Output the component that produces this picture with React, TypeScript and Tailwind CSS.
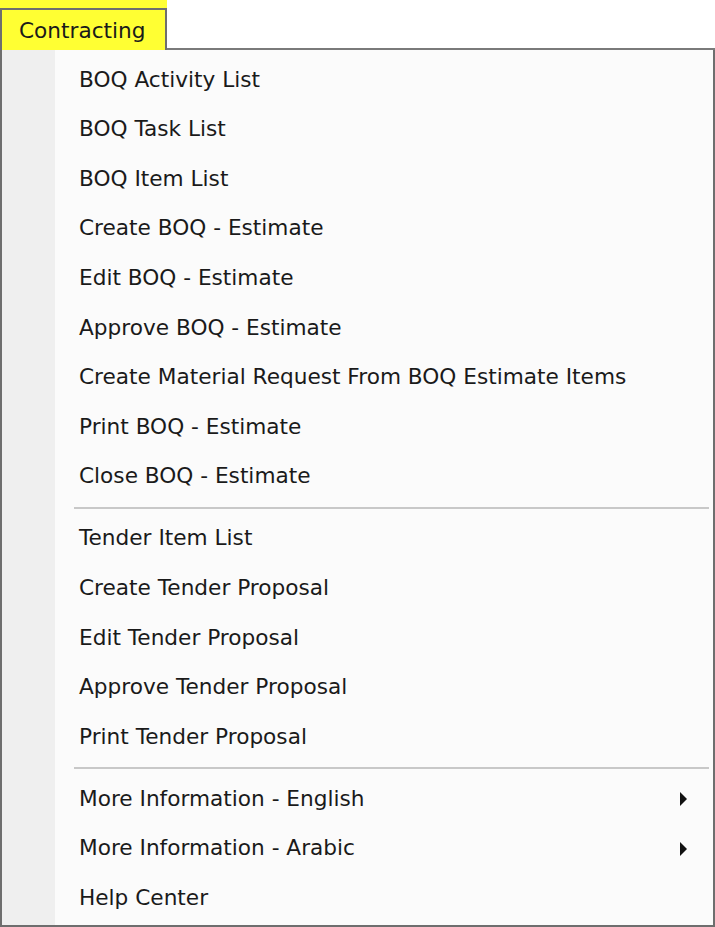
const groups = [
  [
    "BOQ Activity List",
    "BOQ Task List",
    "BOQ Item List",
    "Create BOQ - Estimate",
    "Edit BOQ - Estimate",
    "Approve BOQ - Estimate",
    "Create Material Request From BOQ Estimate Items",
    "Print BOQ - Estimate",
    "Close BOQ - Estimate",
  ],
  [
    "Tender Item List",
    "Create Tender Proposal",
    "Edit Tender Proposal",
    "Approve Tender Proposal",
    "Print Tender Proposal",
  ],
  ["More Information - English", "More Information - Arabic", "Help Center"],
];

const withArrow = ["More Information - English", "More Information - Arabic"];

function MenuItem({ label }: { label: string }) {
  return (
    <div className="flex h-[49.6px] items-center justify-between pl-[77px] pr-[25px]">
      <span>{label}</span>
      {withArrow.includes(label) && (
        <svg width="9" height="14" viewBox="0 0 9 14">
          <path d="M1 0 L8 7 L1 14 Z" fill="#111" />
        </svg>
      )}
    </div>
  );
}

export default function App() {
  return (
    <div
      className="h-[927px] w-[715px] bg-white text-[21.65px] text-[#1a1a1a]"
      style={{ fontFamily: "Tahoma, 'DejaVu Sans', sans-serif" }}
    >
      <div className="flex h-[50px]">
        <div className="w-[167px] bg-[#ffff33] pt-[8px]">
          <div className="h-full border-x-2 border-t-2 border-[#6e6e6e] pl-[17px] pt-[7px] leading-[28px]">
            Contracting
          </div>
        </div>
        <div className="flex-1 border-b-2 border-[#7a7a7a] bg-white" />
      </div>

      <div className="flex h-[877px] border-x-2 border-b-2 border-[#6e6e6e] bg-[#fbfbfb]">
        <div className="w-[53px] shrink-0 bg-[#efefef]" />
        <div className="-ml-[53px] flex-1 pt-[5px]">
          {groups.map((group, gi) => (
            <div key={gi}>
              {gi > 0 && (
                <div className="flex h-[12.5px] items-center pl-[72px] pr-[4px]">
                  <div className="h-[2px] w-full bg-[#c8c8c8]" />
                </div>
              )}
              {group.map((label) => (
                <MenuItem key={label} label={label} />
              ))}
            </div>
          ))}
        </div>
      </div>
    </div>
  );
}
